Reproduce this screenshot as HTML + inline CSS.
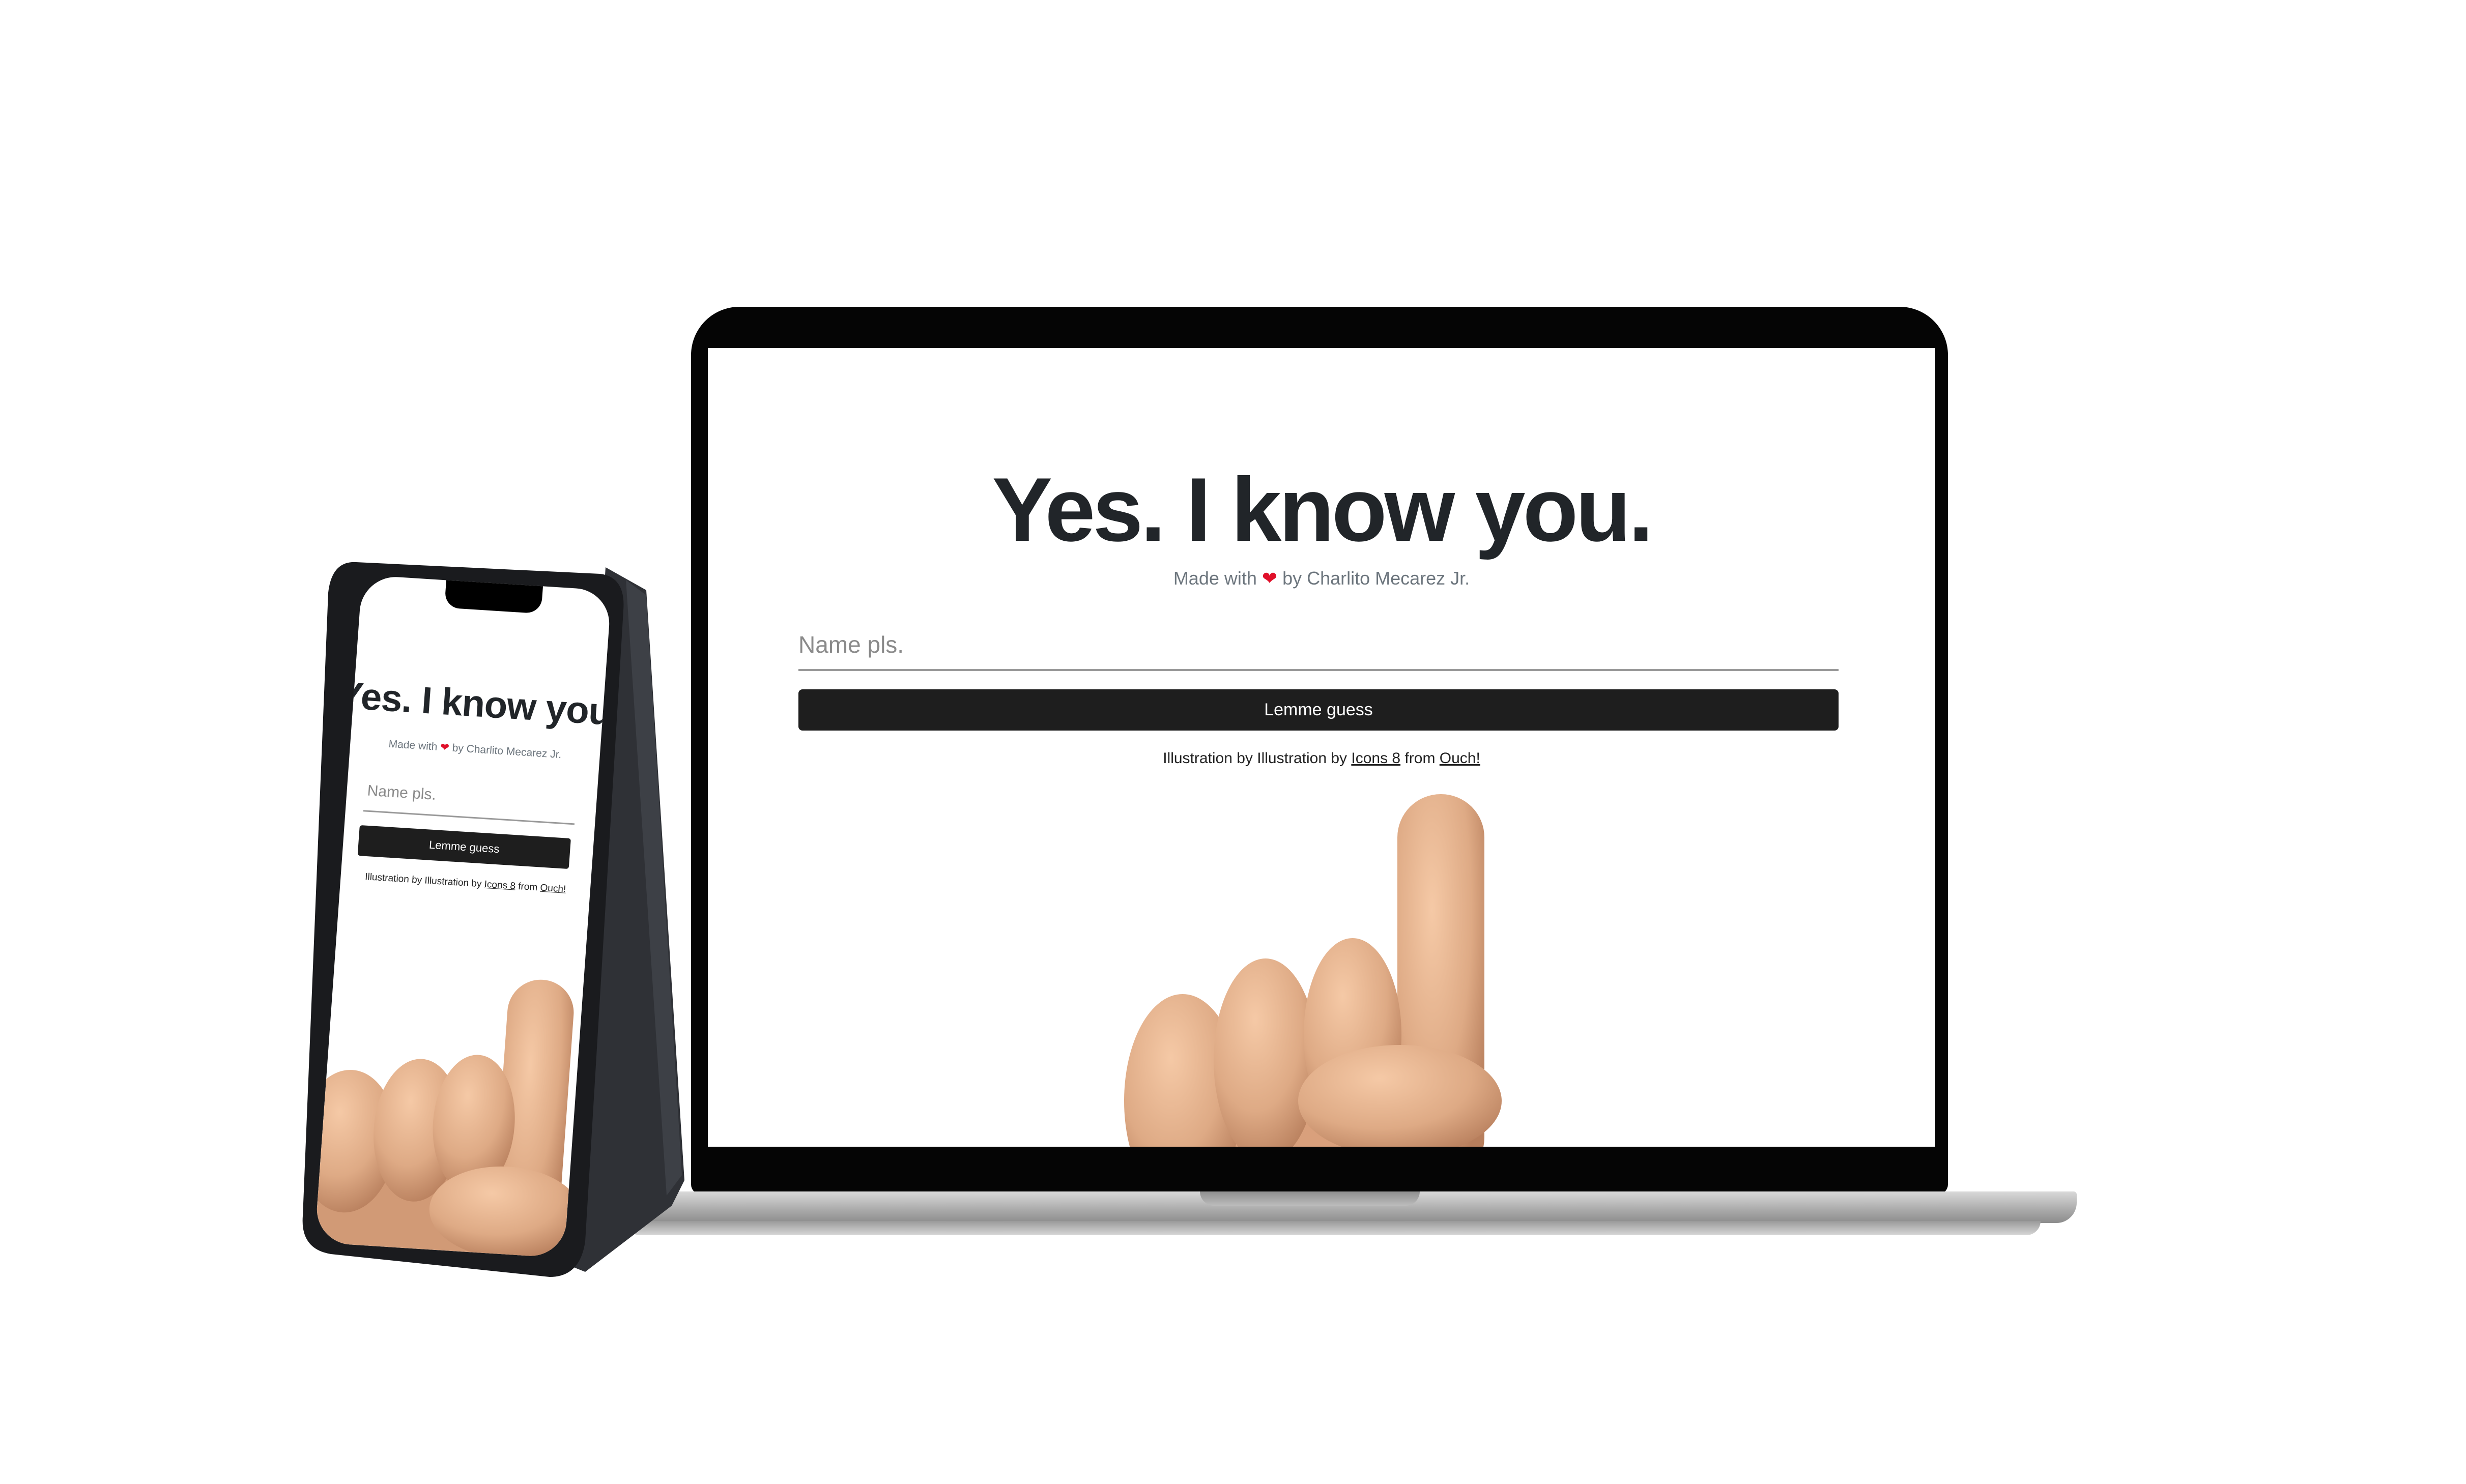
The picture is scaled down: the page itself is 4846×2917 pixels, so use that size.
<!DOCTYPE html>
<html><head><meta charset="utf-8">
<style>
*{margin:0;padding:0;box-sizing:border-box}
body{width:4846px;height:2917px;background:#fff;position:relative;overflow:hidden;font-family:"Liberation Sans",sans-serif}
.abs{position:absolute}
#lap{left:1358px;top:603px;width:2470px;height:1745px;background:#050505;border-radius:95px 95px 20px 20px}
#scr{left:1391px;top:684px;width:2412px;height:1570px;background:#fff;overflow:hidden}
#base{left:1165px;top:2342px;width:2916px;height:62px;background:linear-gradient(#d9d9d9,#a9a9a9 60%,#8c8c8c);border-radius:6px 6px 40px 40px}
#base2{left:1230px;top:2400px;width:2780px;height:28px;background:linear-gradient(#9a9a9a,#d7d7d7);border-radius:0 0 60px 60px}
#notch{left:2358px;top:2342px;width:432px;height:28px;background:linear-gradient(#8f8f8f,#bcbcbc);border-radius:0 0 30px 30px}
.title{position:absolute;left:0;width:100%;text-align:center;font-weight:bold;color:#212529}
.c{position:absolute;left:0;width:100%;text-align:center}
u{text-decoration:underline}
</style></head><body>

<!-- laptop -->
<div class="abs" id="lap"></div>
<div class="abs" id="base"></div>
<div class="abs" id="base2"></div>
<div class="abs" id="notch"></div>
<div class="abs" id="scr">
  <div class="title" style="top:218px;font-size:178px;letter-spacing:-5px;line-height:200px">Yes. I know you.</div>
  <div class="c" style="top:432px;font-size:36px;color:#6c757d">Made with <span style="color:#e0102a">&#10084;</span> by Charlito Mecarez Jr.</div>
  <div class="abs" style="left:178px;top:556px;font-size:46px;color:#8a8a8a">Name pls.</div>
  <div class="abs" style="left:178px;top:631px;width:2044px;height:4px;background:#9a9a9a"></div>
  <div class="abs" style="left:178px;top:671px;width:2044px;height:81px;background:#1e1e1e;border-radius:8px;color:#fff;font-size:34px;text-align:center;line-height:81px">Lemme guess</div>
  <div class="c" style="top:790px;font-size:30px;color:#222">Illustration by Illustration by <u>Icons 8</u> from <u>Ouch!</u></div>
  <svg class="abs" style="left:0;top:0" width="2412" height="1570">
    <defs>
      <radialGradient id="sk" cx="40%" cy="30%" r="75%"><stop offset="0" stop-color="#f5c9a6"/><stop offset="0.6" stop-color="#deaa85"/><stop offset="1" stop-color="#b77e5c"/></radialGradient>
    </defs>
    <rect x="830" y="1450" width="680" height="200" fill="#d9a07c"/>
    <rect x="1355" y="877" width="171" height="760" rx="85" fill="url(#sk)"/>
    <ellipse cx="933" cy="1480" rx="115" ry="210" fill="url(#sk)"/>
    <ellipse cx="1096" cy="1400" rx="102" ry="200" fill="url(#sk)"/>
    <ellipse cx="1267" cy="1350" rx="96" ry="190" fill="url(#sk)"/>
    <ellipse cx="1360" cy="1480" rx="200" ry="110" fill="url(#sk)"/>
  </svg>
</div>

<!-- phone side -->
<svg class="abs" style="left:0;top:0" width="4846" height="2917">
  <polygon points="1190,1115 1270,1160 1345,2320 1320,2370 1150,2500 1100,2480" fill="#2f3136"/>
  <polygon points="1230,1140 1270,1170 1340,2310 1310,2350" fill="#3d4046"/>
  <path d="M700,1105 L1180,1128 Q1230,1135 1225,1200 L1150,2440 Q1140,2510 1080,2510 L650,2465 Q590,2455 595,2390 L645,1165 Q652,1102 700,1105 Z" fill="#1a1b1e"/>
</svg>

<div class="abs" style="left:712px;top:1130px;width:490px;height:1312px;transform-origin:0 0;transform:matrix(1,0.063,-0.0716,1,0,0);background:#fff;border-radius:70px;overflow:hidden">
  <div class="abs" style="left:165px;top:-2px;width:190px;height:56px;background:#000;border-radius:0 0 30px 30px"></div>
  <div class="title" style="top:195px;font-size:74px;letter-spacing:-1px;left:-30px;width:550px;white-space:nowrap">Yes. I know you.</div>
  <div class="c" style="top:315px;font-size:21px;color:#6c757d">Made with <span style="color:#e0102a">&#10084;</span> by Charlito Mecarez Jr.</div>
  <div class="abs" style="left:40px;top:405px;font-size:30px;color:#8a8a8a">Name pls.</div>
  <div class="abs" style="left:35px;top:460px;width:415px;height:3px;background:#999"></div>
  <div class="abs" style="left:30px;top:490px;width:415px;height:60px;background:#1e1e1e;border-radius:5px;color:#fff;font-size:22px;text-align:center;line-height:60px">Lemme guess</div>
  <div class="c" style="top:580px;font-size:19px;color:#222;white-space:nowrap">Illustration by Illustration by <u>Icons 8</u> from <u>Ouch!</u></div>
  <svg class="abs" style="left:0;top:0" width="490" height="1312">
    <defs>
      <radialGradient id="sk2" cx="40%" cy="30%" r="75%"><stop offset="0" stop-color="#f5c9a6"/><stop offset="0.6" stop-color="#deaa85"/><stop offset="1" stop-color="#b77e5c"/></radialGradient>
    </defs>
    <rect x="0" y="1080" width="470" height="240" fill="#d19a76"/>
    <rect x="345" y="770" width="130" height="560" rx="65" fill="url(#sk2)"/>
    <ellipse cx="50" cy="1110" rx="95" ry="140" fill="url(#sk2)"/>
    <ellipse cx="185" cy="1080" rx="85" ry="140" fill="url(#sk2)"/>
    <ellipse cx="295" cy="1060" rx="80" ry="135" fill="url(#sk2)"/>
    <ellipse cx="370" cy="1230" rx="150" ry="90" fill="url(#sk2)"/>
  </svg>
</div>
</body></html>
